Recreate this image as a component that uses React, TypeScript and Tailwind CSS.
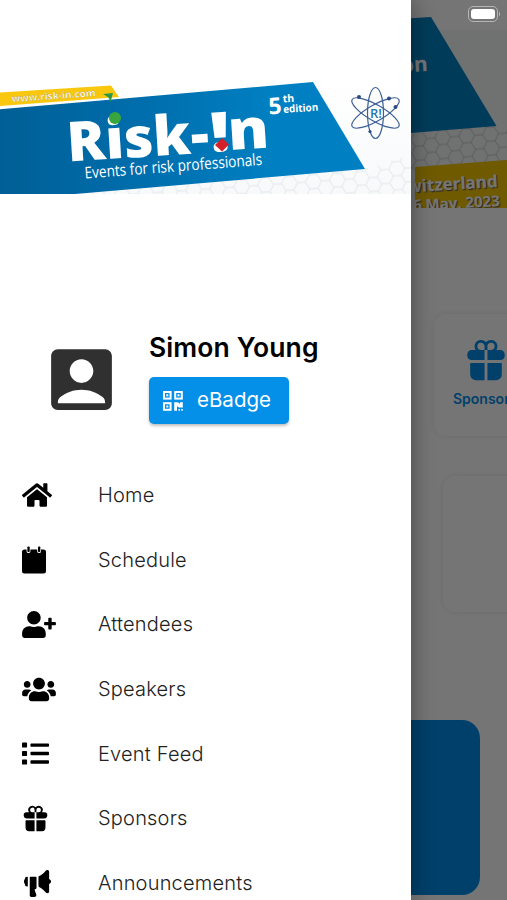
import type { ComponentType } from 'react';
import { FaHome, FaList, FaUserPlus, FaUsers } from 'react-icons/fa';
import { IoGift, IoMegaphone } from 'react-icons/io5';
import { MdAccountBox } from 'react-icons/md';

type IconProps = { className?: string };

function CalendarIcon({ className }: IconProps) {
  return (
    <svg viewBox="0 0 24 28" className={className} fill="currentColor">
      <path d="M2.5 3.5H4.6V5.5Q4.6 7 6.5 7Q8.4 7 8.4 5.5V3.5H15.2V5.5Q15.2 7 17.1 7Q19 7 19 5.5V3.5H21.5Q24 3.5 24 6V25Q24 27.5 21.5 27.5H2.5Q0 27.5 0 25V6Q0 3.5 2.5 3.5Z" />
      <rect x="5.4" y="0.5" width="2.3" height="5.5" rx="0.8" />
      <rect x="16" y="0.5" width="2.3" height="5.5" rx="0.8" />
    </svg>
  );
}

function QrIcon({ className }: IconProps) {
  return (
    <svg viewBox="0 0 20 20" className={className}>
      <g fill="none" stroke="currentColor" strokeWidth="2">
        <rect x="1" y="1" width="6.6" height="6.6" />
        <rect x="12.2" y="1" width="6.6" height="6.6" />
        <rect x="1" y="12.2" width="6.6" height="6.6" />
      </g>
      <g fill="currentColor">
        <rect x="3.3" y="3.3" width="2" height="2" />
        <rect x="14.5" y="3.3" width="2" height="2" />
        <rect x="3.3" y="14.5" width="2" height="2" />
        <path d="M11.2 11.2H14.5L17 12.8V11.2H19.8V16.5H16L14 15.2V19.8H11.2Z" />
        <path d="M15.5 18H17V19.8H15.5ZM18.3 18H19.8V19.8H18.3Z" />
      </g>
    </svg>
  );
}

const MENU: { label: string; icon: ComponentType<IconProps>; size: string; text: string }[] = [
  { label: 'Home', icon: FaHome, size: 'size-[30px]', text: 'tracking-[0.2px]' },
  { label: 'Schedule', icon: CalendarIcon, size: 'w-6 h-7', text: 'tracking-[0.2px]' },
  { label: 'Attendees', icon: FaUserPlus, size: 'w-[34px] h-[27px]', text: 'tracking-[0.2px]' },
  { label: 'Speakers', icon: FaUsers, size: 'w-[34px] h-[27px]', text: 'tracking-[0.2px]' },
  { label: 'Event Feed', icon: FaList, size: 'size-[27px]', text: 'tracking-[0.2px]' },
  { label: 'Sponsors', icon: IoGift, size: 'size-[29px] -ml-px', text: 'tracking-[0.2px]' },
  { label: 'Announcements', icon: IoMegaphone, size: 'size-[31px]', text: 'tracking-[0.2px]' },
];

function HexPattern({ id, color }: { id: string; color: string }) {
  return (
    <pattern id={id} width="24" height="14" patternUnits="userSpaceOnUse" patternTransform="rotate(-4)">
      <path d="M0 7H4L8 0H16L20 7H24M4 7L8 14H16L20 7" fill="none" stroke={color} strokeWidth="0.8" />
    </pattern>
  );
}

function DrawerBanner() {
  return (
    <svg viewBox="0 80 411 114" className="block h-[114px] w-[411px] shrink-0">
      <defs>
        <linearGradient id="blue" x1="0" x2="1">
          <stop offset="0" stopColor="#005f96" />
          <stop offset="0.4" stopColor="#006ead" />
          <stop offset="0.75" stopColor="#0080c2" />
        </linearGradient>
        <linearGradient id="paper" x1="0" x2="0" y1="0" y2="1">
          <stop offset="0" stopColor="#ffffff" />
          <stop offset="1" stopColor="#f7f9fa" />
        </linearGradient>
        <HexPattern id="hex" color="#dde3e6" />
      </defs>
      <rect y="80" width="411" height="114" fill="url(#paper)" />
      <path d="M75 194L365 169L411 155V194Z" fill="url(#hex)" />
      <path d="M0 92.5L111 85.5L119 97L0 106Z" fill="#f9c80e" />
      <path d="M0 109.3L313 82L365 169L75 194H0Z" fill="url(#blue)" />
      <path d="M103 94L113 93L110.5 102L108.5 97.5Z" fill="#269a48" />
      <text x="12" y="102" transform="rotate(-4 12 102)" fontFamily="Open Sans, sans-serif" fontSize="9.5" fontWeight="700" fill="#fff" stroke="#a99035" strokeWidth="0.25" textLength="84" lengthAdjust="spacingAndGlyphs">www.risk-in.com</text>
      <g fontFamily="Open Sans, sans-serif" fill="#fff">
        <g fontWeight="800" fontSize="55">
          <text x="68" y="161.5" transform="rotate(-3.6 68 161.5)" textLength="142" lengthAdjust="spacingAndGlyphs">Risk-</text>
          <text x="211" y="152" transform="rotate(-3.6 211 152)" textLength="20" lengthAdjust="spacingAndGlyphs">!</text>
          <text x="229" y="150" transform="rotate(-3.6 229 150)" textLength="41" lengthAdjust="spacingAndGlyphs">n</text>
        </g>
        <text x="85" y="178.5" transform="rotate(-4.4 85 178.5)" fontSize="16" textLength="178" lengthAdjust="spacingAndGlyphs">Events for risk professionals</text>
        <g fontWeight="700">
          <text x="269" y="114.5" transform="rotate(-4 269 114.5)" fontSize="23">5</text>
          <text x="283" y="102.5" transform="rotate(-4 283 102.5)" fontSize="10.5">th</text>
          <text x="283.5" y="113" transform="rotate(-4 283.5 113)" fontSize="10.5" textLength="35" lengthAdjust="spacingAndGlyphs">edition</text>
        </g>
      </g>
      <circle cx="115" cy="118" r="6" fill="#38a63c" />
      <path d="M222 138L229 144.5L222 151.5L215 145Z" fill="#d4202a" />
      <g fill="none" stroke="#3d5f95" strokeWidth="1.2">
        <ellipse cx="375.5" cy="113" rx="8" ry="25.5" />
        <ellipse cx="375.5" cy="113" rx="8" ry="27" transform="rotate(60 375.5 113)" />
        <ellipse cx="375.5" cy="113" rx="8" ry="27" transform="rotate(-60 375.5 113)" />
      </g>
      <g fill="#294c85">
        <circle cx="359" cy="97" r="2" />
        <circle cx="389" cy="98.5" r="2" />
        <circle cx="395.5" cy="107" r="2" />
        <circle cx="370" cy="131.5" r="1.6" />
      </g>
      <text x="370" y="118" fontFamily="Open Sans, sans-serif" fontSize="13" fontWeight="600" fill="#2777ae">R!</text>
    </svg>
  );
}

function PageBanner() {
  return (
    <svg viewBox="411 0 96 208" className="block h-[208px] w-24">
      <defs>
        <HexPattern id="hex-page" color="#bcc1c3" />
      </defs>
      <rect x="411" y="14" width="96" height="194" fill="#f5f6f7" />
      <rect x="411" y="0" width="96" height="30" fill="#fff" />
      <path d="M411 134L507 124V162L411 170Z" fill="url(#hex-page)" />
      <path d="M400 19L431 17L496.500 126L400 134Z" fill="#0083c4" />
      <path d="M415 167L507 160V208H415Z" fill="#f2c500" />
      <g fontFamily="Open Sans, sans-serif" fontWeight="700" fill="#fff">
        <text x="428" y="71" textAnchor="end" fontSize="21" transform="rotate(-3 428 71)">edition</text>
        <g style={{ textShadow: '1px 1px 1px #555' }}>
          <svg x="415" y="150" width="92" height="58" viewBox="415 150 92 58">
            <text x="498" y="187" textAnchor="end" fontSize="17" transform="rotate(-3.500 498 187)">Switzerland</text>
            <text x="500" y="206" textAnchor="end" fontSize="15" transform="rotate(-3 500 206)">16 May, 2023</text>
          </svg>
        </g>
      </g>
    </svg>
  );
}

function EventPage() {
  return (
    <main className="ml-[411px] h-full w-24 overflow-hidden bg-white">
      <PageBanner />
      <div className="ml-[23px] mt-[106px] flex h-[122px] w-32 flex-col rounded-xl pl-[19px] pt-6 text-[#008de6] shadow-[0_0_7px_rgba(0,0,0,0.09)]">
        <IoGift className="-mt-px h-[46px] w-[46px] ml-[10px]" />
        <span className="mt-1.5 text-[14px] font-semibold leading-5">Sponsors</span>
      </div>
      <div className="ml-8 mt-10 h-[136px] w-32 rounded-xl shadow-[0_0_7px_rgba(0,0,0,0.09)]" />
      <div className="mt-[108px] h-[175px] w-[69px] rounded-r-[18px] bg-[#008de6]" />
    </main>
  );
}

function Battery() {
  return (
    <div className="absolute right-[7px] top-1.5 flex items-center gap-px">
      <div className="h-4 w-[30px] rounded-[5px] border border-[#b5b5b5] p-0.5">
        <div className="h-full rounded-[3px] bg-white" />
      </div>
      <div className="h-1 w-[1.5px] rounded-r-full bg-[#b5b5b5]" />
    </div>
  );
}

function Drawer() {
  return (
    <aside className="absolute inset-y-0 left-0 flex w-[411px] flex-col overflow-hidden bg-white pt-20 shadow-[2px_0_20px_rgba(0,0,0,0.35)]">
      <DrawerBanner />
      <div className="mt-[136px] flex h-[98px] shrink-0 pl-[41px]">
        <MdAccountBox className="mt-[9px] size-[81px] text-[#303030]" />
        <div className="ml-[27px] flex flex-col items-start">
          <h1 className="h-[47px] whitespace-nowrap text-[26.5px] font-semibold leading-[35px] tracking-[0.1px] text-black">Simon Young</h1>
          <button
            type="button"
            className="flex h-[47px] w-[140px] items-center rounded-[5px] bg-[#048fe9] pl-[14px] text-white shadow-[0_2px_3px_rgba(0,0,0,0.25)]"
          >
            <QrIcon className="size-5" />
            <span className="ml-[14px] text-[20.5px] leading-none">eBadge</span>
          </button>
        </div>
      </div>
      <nav className="mt-[34.600px] flex flex-col">
        {MENU.map(({ label, icon: Icon, size, text }) => (
          <a key={label} className="flex h-[64.700px] shrink-0 items-center pl-[22px] text-black">
            <span className="flex w-[76px] shrink-0 items-center">
              <Icon className={size} />
            </span>
            <span className={`whitespace-nowrap text-[20px] font-light text-[#222] ${text}`}>{label}</span>
          </a>
        ))}
      </nav>
    </aside>
  );
}

export default function App() {
  return (
    <div className="relative h-[900px] w-[507px] overflow-hidden bg-white font-['Inter','Liberation_Sans',sans-serif]">
      <EventPage />
      <div className="absolute inset-0 bg-black/54" />
      <Battery />
      <Drawer />
    </div>
  );
}
